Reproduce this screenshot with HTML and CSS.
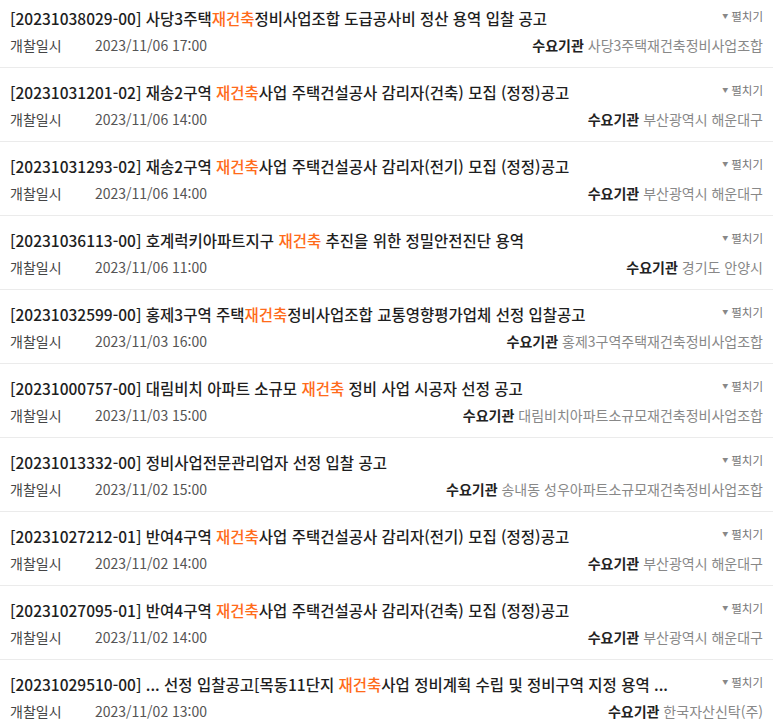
FILE: index.html
```html
<!DOCTYPE html>
<html lang="ko">
<head>
<meta charset="utf-8">
<link rel="stylesheet" href="styles.css">
</head>
<body>
<ul class="list">
  <li class="item">
    <div class="top"><div class="title">[20231038029-00] 사당3주택<em>재건축</em>정비사업조합 도급공사비 정산 용역 입찰 공고</div><span class="toggle"><span class="tri">▼</span>펼치기</span></div>
    <div class="meta"><span class="label">개찰일시</span><span class="date">2023/11/06 17:00</span><span class="org"><b>수요기관</b> 사당3주택재건축정비사업조합</span></div>
  </li>
  <li class="item">
    <div class="top"><div class="title">[20231031201-02] 재송2구역 <em>재건축</em>사업 주택건설공사 감리자(건축) 모집 (정정)공고</div><span class="toggle"><span class="tri">▼</span>펼치기</span></div>
    <div class="meta"><span class="label">개찰일시</span><span class="date">2023/11/06 14:00</span><span class="org"><b>수요기관</b> 부산광역시 해운대구</span></div>
  </li>
  <li class="item">
    <div class="top"><div class="title">[20231031293-02] 재송2구역 <em>재건축</em>사업 주택건설공사 감리자(전기) 모집 (정정)공고</div><span class="toggle"><span class="tri">▼</span>펼치기</span></div>
    <div class="meta"><span class="label">개찰일시</span><span class="date">2023/11/06 14:00</span><span class="org"><b>수요기관</b> 부산광역시 해운대구</span></div>
  </li>
  <li class="item">
    <div class="top"><div class="title">[20231036113-00] 호계럭키아파트지구 <em>재건축</em> 추진을 위한 정밀안전진단 용역</div><span class="toggle"><span class="tri">▼</span>펼치기</span></div>
    <div class="meta"><span class="label">개찰일시</span><span class="date">2023/11/06 11:00</span><span class="org"><b>수요기관</b> 경기도 안양시</span></div>
  </li>
  <li class="item">
    <div class="top"><div class="title">[20231032599-00] 홍제3구역 주택<em>재건축</em>정비사업조합 교통영향평가업체 선정 입찰공고</div><span class="toggle"><span class="tri">▼</span>펼치기</span></div>
    <div class="meta"><span class="label">개찰일시</span><span class="date">2023/11/03 16:00</span><span class="org"><b>수요기관</b> 홍제3구역주택재건축정비사업조합</span></div>
  </li>
  <li class="item">
    <div class="top"><div class="title">[20231000757-00] 대림비치 아파트 소규모 <em>재건축</em> 정비 사업 시공자 선정 공고</div><span class="toggle"><span class="tri">▼</span>펼치기</span></div>
    <div class="meta"><span class="label">개찰일시</span><span class="date">2023/11/03 15:00</span><span class="org"><b>수요기관</b> 대림비치아파트소규모재건축정비사업조합</span></div>
  </li>
  <li class="item">
    <div class="top"><div class="title">[20231013332-00] 정비사업전문관리업자 선정 입찰 공고</div><span class="toggle"><span class="tri">▼</span>펼치기</span></div>
    <div class="meta"><span class="label">개찰일시</span><span class="date">2023/11/02 15:00</span><span class="org"><b>수요기관</b> 송내동 성우아파트소규모재건축정비사업조합</span></div>
  </li>
  <li class="item">
    <div class="top"><div class="title">[20231027212-01] 반여4구역 <em>재건축</em>사업 주택건설공사 감리자(전기) 모집 (정정)공고</div><span class="toggle"><span class="tri">▼</span>펼치기</span></div>
    <div class="meta"><span class="label">개찰일시</span><span class="date">2023/11/02 14:00</span><span class="org"><b>수요기관</b> 부산광역시 해운대구</span></div>
  </li>
  <li class="item">
    <div class="top"><div class="title">[20231027095-01] 반여4구역 <em>재건축</em>사업 주택건설공사 감리자(건축) 모집 (정정)공고</div><span class="toggle"><span class="tri">▼</span>펼치기</span></div>
    <div class="meta"><span class="label">개찰일시</span><span class="date">2023/11/02 14:00</span><span class="org"><b>수요기관</b> 부산광역시 해운대구</span></div>
  </li>
  <li class="item">
    <div class="top"><div class="title">[20231029510-00] ... 선정 입찰공고[목동11단지 <em>재건축</em>사업 정비계획 수립 및 정비구역 지정 용역 ...</div><span class="toggle"><span class="tri">▼</span>펼치기</span></div>
    <div class="meta"><span class="label">개찰일시</span><span class="date">2023/11/02 13:00</span><span class="org"><b>수요기관</b> 한국자산신탁(주)</span></div>
  </li>
</ul>
</body>
</html>
```
FILE: styles.css
```css
html, body { margin: 0; padding: 0; background: #fff; }
body { font-family: "Noto Sans CJK KR", "Noto Sans", sans-serif; color: #222; overflow: hidden; }
.list { list-style: none; margin: -6px 0 0; padding: 0; }
.item { height: 73px; border-bottom: 1px solid #ebebeb; padding: 0 10px; display: flex; flex-direction: column; }
.top { display: flex; justify-content: space-between; align-items: flex-start; padding-top: 12px; height: 24px; }
.title { font-size: 15.5px; font-weight: 500; line-height: 24px; white-space: nowrap; color: #1e1e1e; }
.title em { font-style: normal; color: #ff6b1a; }
.toggle { font-size: 11.5px; color: #777; line-height: 14px; margin-top: 3px; display: flex; align-items: center; }
.tri { font-size: 6px; margin-right: 3px; color: #888; }
.meta { display: flex; align-items: center; margin-top: 5px; font-size: 14px; line-height: 20px; }
.label { width: 85px; color: #444; }
.date { color: #555; }
.org { margin-left: auto; color: #888; }
.org b { color: #222; font-weight: 700; }
```
